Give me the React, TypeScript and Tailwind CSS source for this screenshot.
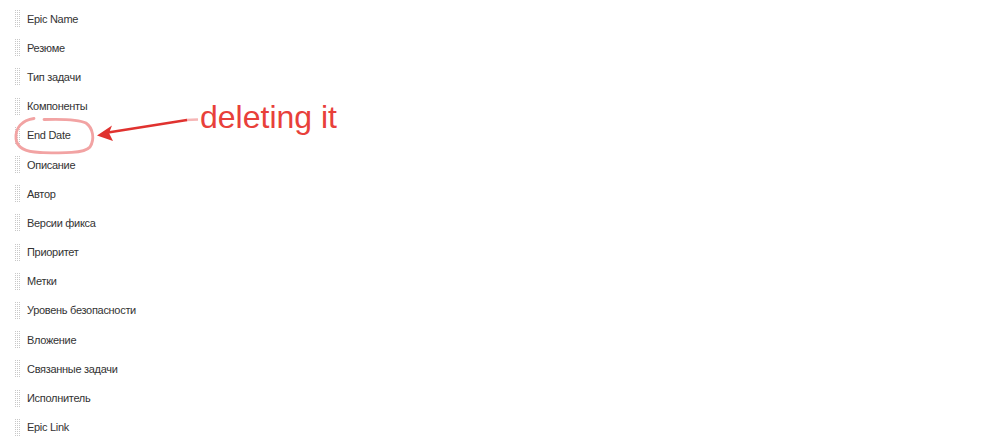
import React from "react";

const items = [
  "Epic Name",
  "Резюме",
  "Тип задачи",
  "Компоненты",
  "End Date",
  "Описание",
  "Автор",
  "Версии фикса",
  "Приоритет",
  "Метки",
  "Уровень безопасности",
  "Вложение",
  "Связанные задачи",
  "Исполнитель",
  "Epic Link",
];

function Handle() {
  const dots: React.ReactElement[] = [];
  for (let y = 0; y < 9; y++) {
    for (let x = 0; x < 3; x++) {
      dots.push(<rect key={`${x}-${y}`} x={x * 2} y={y * 2} width="1" height="1" fill="#c8c8c8" />);
    }
  }
  return (
    <svg width="6" height="18" viewBox="0 0 6 18" className="shrink-0">
      {dots}
    </svg>
  );
}

export default function App() {
  return (
    <div className="relative w-[998px] h-[444px] bg-white overflow-hidden" style={{ fontFamily: '"Liberation Sans", Arial, sans-serif' }}>
      <ul className="flex flex-col pt-[4.5px] pl-[15px]">
        {items.map((t) => (
          <li key={t} className="flex items-center h-[29.2px] gap-[6px]">
            <Handle />
            <span className="text-[11px] tracking-[-0.3px] text-[#333333] leading-none">{t}</span>
          </li>
        ))}
      </ul>
      <svg className="absolute left-0 top-0 pointer-events-none" width="998" height="444" viewBox="0 0 998 444">
        <path
          d="M 34 118.5 C 22 120, 15 128, 16 139 C 17 148, 26 152, 40 152.5 C 60 153, 84 154, 90 147 C 95 139, 93 128, 86 123 C 78 119, 60 119, 44 119.5"
          fill="none"
          stroke="#f2a3a3"
          strokeWidth="2.8"
          strokeLinecap="round"
        />
        <line x1="186" y1="120" x2="198" y2="119.5" stroke="#f6b6b6" strokeWidth="2.5" />
        <line x1="187" y1="120" x2="108" y2="132.5" stroke="#e0322f" strokeWidth="2.6" />
        <polygon points="97,135.5 112,125.5 109,133 113,141" fill="#e0322f" />
      </svg>
      <div
        className="absolute left-[200px] top-[101px] text-[32px] leading-none text-[#e8403a]"
        style={{ fontFamily: '"Liberation Sans", Arial, sans-serif' }}
      >
        deleting it
      </div>
    </div>
  );
}
